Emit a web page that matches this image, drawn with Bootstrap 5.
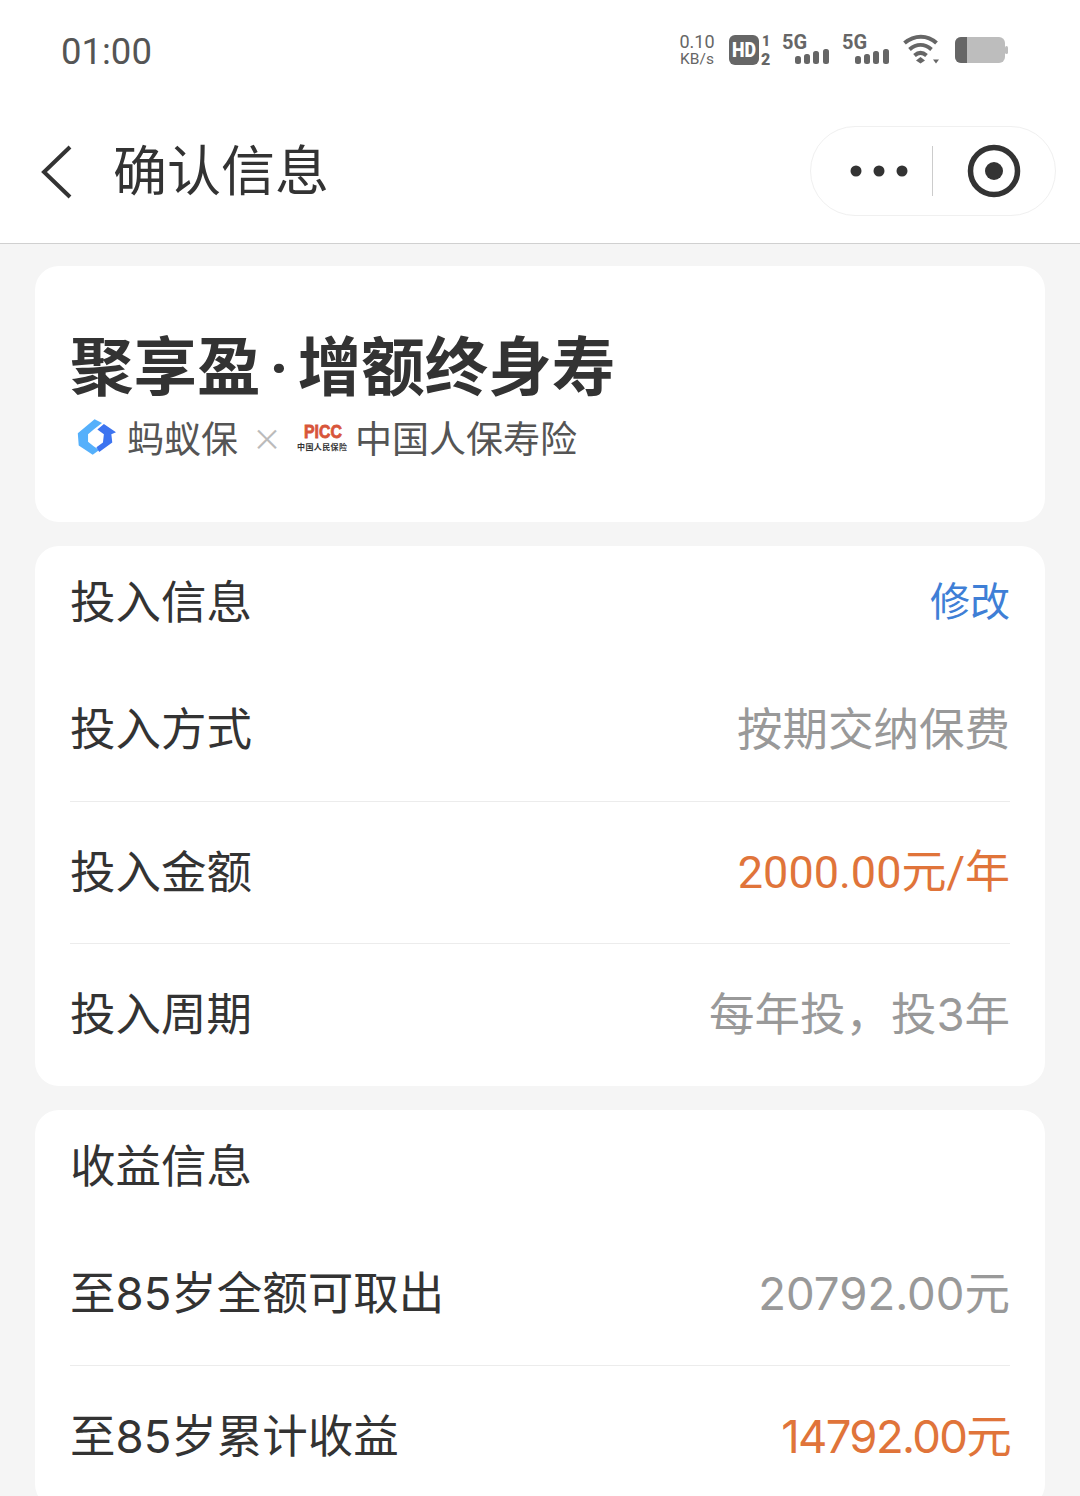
<!DOCTYPE html>
<html lang="zh-CN">
<head>
    <meta charset="UTF-8">
    <meta name="viewport" content="width=device-width, initial-scale=1.0">
    <title>确认信息</title>
    <link href="https://cdn.jsdelivr.net/npm/bootstrap@5.3.2/dist/css/bootstrap.min.css" rel="stylesheet">
    <style>
        html, body { height: 1496px; overflow: hidden; }
        body {
            background: #f5f5f5;
            color: #333;
            font-family: Inter, "Noto Sans CJK SC", sans-serif;
        }
        .top-area { background: #fff; height: 244px; border-bottom: 1px solid #d0d0d0; }
        .status-row { height: 100px; padding: 0 72px 0 61px; }
        .clock { font-family: Roboto, sans-serif; font-size: 36.5px; color: #555; padding-top: 5px; }
        .net-speed { font-family: Roboto, sans-serif; color: #666; text-align: center; width: 36px; margin-right: 14px; }
        .net-top { font-size: 18px; line-height: 18px; display: block; }
        .net-unit { font-size: 15.500px; line-height: 16px; display: block; }
        .status-icon { display: block; overflow: visible; }
        .gap-hd { margin-right: 10px; }
        .gap-sig { margin-right: 12px; }
        .gap-wifi { margin-right: 13px; }
        .gap-end { margin-right: 15px; }
        .title-row { height: 143px; padding: 0 24px 0 41px; }
        .page-title { font-size: 54px; line-height: 1; margin: 0 0 8px 41px; color: #333; font-weight: 400; font-family: "Noto Sans CJK SC", sans-serif; }
        .capsule {
            width: 246px; height: 90px; border: 1px solid #f0f0f0; border-radius: 45px; margin-bottom: 2px;
        }
        .capsule-line { width: 1px; height: 50px; background: #ccc; }
        .dots-part { padding-left: 14px; }
        .target-part { width: 122px; }
        .sheet { background: #fff; border-radius: 24px; margin: 0 35px 24px; padding: 0 35px; }
        .sheet-brand { height: 256px; margin-top: 22px; padding-top: 56px; }
        .brand-title { font-size: 63.500px; line-height: 80px; font-weight: 700; color: #333; margin: 0; white-space: nowrap; font-family: "Noto Sans CJK SC", sans-serif; }
        .brand-dot { font-family: Roboto, sans-serif; padding: 0 9px; }
        .brand-line { font-size: 37px; line-height: 50px; color: #555; margin-top: 3px; font-family: "Noto Sans CJK SC", sans-serif; }
        .logo-gap { margin: 0 11px 0 5px; }
        .times { color: #bbb; font-size: 30px; margin: 0 14px; }
        .picc-gap { margin-right: 7px; }
        .head-row { height: 112px; font-size: 45.500px; padding-top: 3px; }
        .edit-link { font-size: 40px; color: #3f7fd6; text-decoration: none; margin-top: -3px; }
        .info-row { height: 142px; font-size: 45.500px; padding-top: 1px; border-bottom: 1px solid #ececec; }
        .info-row:last-child { border-bottom: 0; }
        .first-row { height: 144px; }
        .val-gray { color: #999; }
        .val-orange { color: #e0743a; }
        .num-narrow { font-family: Roboto, "Noto Sans CJK SC", sans-serif; font-size: 45px; }
        .num-tight { letter-spacing: -1.700px; }
    </style>
</head>
<body>
    <div class="top-area">
        <div class="status-row d-flex align-items-center justify-content-between">
            <span class="clock">01:00</span>
            <div class="d-flex align-items-center">
                <div class="net-speed"><span class="net-top">0.10</span><span class="net-unit">KB/s</span></div>
                <svg class="status-icon gap-hd" width="43" height="34" viewBox="0 0 43 34">
                    <rect x="0" y="2" width="30" height="30" rx="6" fill="#666"/>
                    <text x="3" y="24" font-family="Roboto" font-weight="900" font-size="20" fill="#fff" textLength="24" lengthAdjust="spacingAndGlyphs">HD</text>
                    <text x="33" y="13" font-family="Roboto" font-weight="900" font-size="14" fill="#666">1</text>
                    <text x="32" y="31.500" font-family="Roboto" font-weight="900" font-size="16" fill="#666">2</text>
                </svg>
                <svg class="status-icon gap-sig" width="48" height="34" viewBox="0 0 48 34">
                    <text x="0" y="16" font-family="Roboto" font-weight="700" font-size="20" fill="#666">5G</text>
                    <g fill="#666"><rect x="13" y="23" width="6" height="8" rx="2.500"/><rect x="22" y="21" width="6" height="10" rx="2.500"/><rect x="31" y="18" width="6" height="13" rx="2.500"/><rect x="41" y="16" width="6" height="15" rx="2.500"/></g>
                </svg>
                <svg class="status-icon gap-wifi" width="48" height="34" viewBox="0 0 48 34">
                    <text x="0" y="16" font-family="Roboto" font-weight="700" font-size="20" fill="#666">5G</text>
                    <g fill="#666"><rect x="13" y="23" width="6" height="8" rx="2.500"/><rect x="22" y="21" width="6" height="10" rx="2.500"/><rect x="31" y="18" width="6" height="13" rx="2.500"/><rect x="41" y="16" width="6" height="15" rx="2.500"/></g>
                </svg>
                <svg class="status-icon gap-end" width="37" height="34" viewBox="0 0 37 34">
                    <g fill="none" stroke="#666" stroke-width="4"><path d="M1.500 10c10-8.500 23-8.500 32 0"/><path d="M6.500 16.500c7-6 15-6 22 0"/><path d="M11.500 22.500c4-3.500 8-3.500 12 0"/></g>
                    <path d="M13 27.500l4.500-3.500 4.500 3.500-4.500 3z" fill="#666"/>
                    <path d="M30 26.500h6l-3 4z" fill="#666"/>
                </svg>
                <svg class="status-icon" width="53" height="26" viewBox="0 0 53 26">
                    <rect x="0" y="0" width="50" height="26" rx="6" fill="#bdbdbd"/>
                    <path d="M6 0h6v26H6a6 6 0 0 1-6-6V6a6 6 0 0 1 6-6z" fill="#666"/>
                    <rect x="50" y="9" width="3" height="8" rx="1.500" fill="#bdbdbd"/>
                </svg>
            </div>
        </div>
        <div class="title-row d-flex align-items-center">
            <svg width="31" height="54" viewBox="0 0 31 54"><path d="M29 2L3 27l26 25" fill="none" stroke="#333" stroke-width="4"/></svg>
            <h1 class="page-title">确认信息</h1>
            <div class="capsule d-flex align-items-center ms-auto">
                <div class="dots-part d-flex justify-content-center flex-grow-1">
                    <svg width="58" height="12" viewBox="0 0 58 12" fill="#333"><circle cx="6" cy="6" r="5.500"/><circle cx="29" cy="6" r="5.500"/><circle cx="52" cy="6" r="5.500"/></svg>
                </div>
                <div class="capsule-line"></div>
                <div class="target-part d-flex justify-content-center">
                    <svg width="54" height="54" viewBox="0 0 54 54"><circle cx="27" cy="27" r="23.500" fill="none" stroke="#333" stroke-width="5.500"/><circle cx="27" cy="27" r="9" fill="#333"/></svg>
                </div>
            </div>
        </div>
    </div>

    <div class="sheet sheet-brand">
        <h2 class="brand-title">聚享盈<span class="brand-dot">·</span>增额终身寿</h2>
        <div class="brand-line d-flex align-items-center">
            <svg class="logo-gap" width="41" height="44" viewBox="0 0 44 44">
                <path d="M21 3l8 4-9 7-6 5v8l6 5 6 4-7 5-15-10-1-13z" fill="#55b0fb"/>
                <path d="M31 8l13 9-5 2 1 9-14 10-3-5 7-5 1-9-7-5z" fill="#3d74f0"/>
            </svg>
            <span>蚂蚁保</span>
            <span class="times">×</span>
            <svg class="picc-gap" width="52" height="32" viewBox="0 0 52 32">
                <text x="8" y="17" font-family="Liberation Sans" font-weight="700" font-size="19" fill="#d8553a" stroke="#d8553a" stroke-width=".8" textLength="38" lengthAdjust="spacingAndGlyphs">PICC</text>
                <text x="1" y="29" font-family="Noto Sans CJK SC" font-weight="700" font-size="8" fill="#333" textLength="50">中国人民保险</text>
            </svg>
            <span>中国人保寿险</span>
        </div>
    </div>

    <div class="sheet">
        <div class="head-row d-flex align-items-center justify-content-between">
            <span>投入信息</span>
            <a class="edit-link" href="#">修改</a>
        </div>
        <div class="info-row first-row d-flex align-items-center justify-content-between">
            <span>投入方式</span><span class="val-gray">按期交纳保费</span>
        </div>
        <div class="info-row d-flex align-items-center justify-content-between">
            <span>投入金额</span><span class="val-orange num-narrow">2000.00元/年</span>
        </div>
        <div class="info-row d-flex align-items-center justify-content-between">
            <span>投入周期</span><span class="val-gray">每年投，投3年</span>
        </div>
    </div>

    <div class="sheet">
        <div class="head-row d-flex align-items-center justify-content-between">
            <span>收益信息</span>
        </div>
        <div class="info-row first-row d-flex align-items-center justify-content-between">
            <span>至85岁全额可取出</span><span class="val-gray">20792.00元</span>
        </div>
        <div class="info-row d-flex align-items-center justify-content-between">
            <span>至85岁累计收益</span><span class="val-orange num-tight">14792.00元</span>
        </div>
    </div>

    <script src="https://cdn.jsdelivr.net/npm/bootstrap@5.3.2/dist/js/bootstrap.bundle.min.js"></script>
</body>
</html>
